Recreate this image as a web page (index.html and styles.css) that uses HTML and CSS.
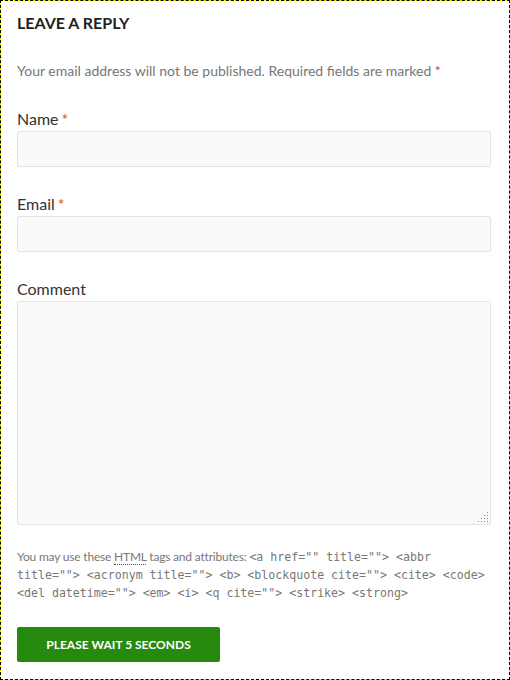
FILE: index.html
```html
<!DOCTYPE html>
<html>
<head>
<meta charset="utf-8">
<link rel="stylesheet" href="styles.css">
</head>
<body>
<div class="frame">
  <section class="reply">
    <h3 class="reply-title">Leave a Reply</h3>
    <p class="notes">Your email address will not be published. Required fields are marked <span class="req">*</span></p>
    <div class="field">
      <label class="label">Name<span class="req label-req">*</span></label>
      <input class="input" type="text">
    </div>
    <div class="field">
      <label class="label">Email<span class="req label-req">*</span></label>
      <input class="input" type="text">
    </div>
    <div class="field">
      <label class="label">Comment</label>
      <div class="textarea-wrap">
        <textarea class="textarea"></textarea>
        <svg class="grip" width="12" height="12" viewBox="0 0 12 12">
          <g fill="#8a8a8a">
            <rect x="10" y="1" width="1" height="1"/>
            <rect x="7" y="4" width="1" height="1"/><rect x="10" y="4" width="1" height="1"/>
            <rect x="4" y="7" width="1" height="1"/><rect x="7" y="7" width="1" height="1"/><rect x="10" y="7" width="1" height="1"/>
            <rect x="1" y="10" width="1" height="1"/><rect x="4" y="10" width="1" height="1"/><rect x="7" y="10" width="1" height="1"/><rect x="10" y="10" width="1" height="1"/>
          </g>
        </svg>
      </div>
    </div>
    <p class="allowed">You may use these <abbr class="abbr" title="HyperText Markup Language">HTML</abbr> tags and attributes: <code class="code">&lt;a href="" title=""&gt; &lt;abbr title=""&gt; &lt;acronym title=""&gt; &lt;b&gt; &lt;blockquote cite=""&gt; &lt;cite&gt; &lt;code&gt; &lt;del datetime=""&gt; &lt;em&gt; &lt;i&gt; &lt;q cite=""&gt; &lt;strike&gt; &lt;strong&gt;</code></p>
    <button class="submit" type="button">Please wait 5 seconds</button>
  </section>
</div>
</body>
</html>
```
FILE: styles.css
```css
html, body {
  margin: 0;
  padding: 0;
  background: #fff;
}
.frame {
  box-sizing: border-box;
  width: 510px;
  height: 680px;
  border: 1px dashed #000;
  background: linear-gradient(#fff, #fff) padding-box, linear-gradient(#ff0, #ff0) border-box;
  padding: 0 18px 0 16px;
  font-family: Lato, "Liberation Sans", sans-serif;
}
.reply {
  display: flex;
  flex-direction: column;
}
.reply-title {
  margin: 12px 0 0;
  font-size: 16px;
  line-height: 20px;
  font-weight: 700;
  text-transform: uppercase;
  letter-spacing: 0;
  color: #222;
}
.notes {
  margin: 28px 0 0;
  font-size: 14px;
  line-height: 20px;
  color: #777;
}
.req {
  color: #e0453b;
}
.label-req {
  margin-left: 3px;
}
.field {
  display: flex;
  flex-direction: column;
  margin-top: 28px;
}
.field + .field {
  margin-top: 27px;
}
.label {
  font-size: 16px;
  line-height: 20px;
  color: #333;
  margin-bottom: 2px;
}
.input, .textarea {
  box-sizing: border-box;
  width: 474px;
  border: 1px solid #e3e3e3;
  border-radius: 2px;
  background: #fafafa;
  margin: 0;
  padding: 6px 10px;
  font: inherit;
  outline: none;
}
.input {
  height: 36px;
}
.textarea-wrap {
  position: relative;
  width: 474px;
}
.textarea {
  height: 224px;
  resize: none;
  display: block;
}
.grip {
  position: absolute;
  right: 2px;
  bottom: 2px;
  display: block;
}
.allowed {
  margin: 23px 0 0;
  font-size: 12px;
  line-height: 18px;
  color: #777;
  letter-spacing: -0.2px;
}
.abbr {
  text-decoration: none;
  border-bottom: 1px dotted #555;
  cursor: help;
}
.code {
  font-family: "DejaVu Sans Mono", monospace;
  font-size: 11.6px;
  letter-spacing: 0;
  color: #777;
}
.submit {
  align-self: flex-start;
  margin-top: 25px;
  width: 203px;
  height: 35px;
  border: none;
  border-radius: 2px;
  background: #268a0f;
  color: #fff;
  font-family: Lato, "Liberation Sans", sans-serif;
  font-size: 12px;
  font-weight: 700;
  text-transform: uppercase;
  letter-spacing: 0;
  cursor: pointer;
}
```
